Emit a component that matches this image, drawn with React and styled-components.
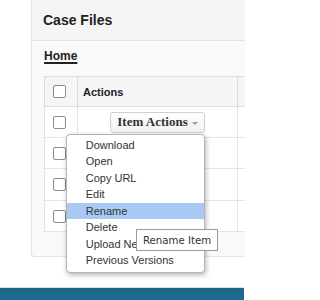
import React from 'react';
import styled, { createGlobalStyle } from 'styled-components';

const GlobalStyle = createGlobalStyle`
  html, body {
    margin: 0;
    padding: 0;
    background: #fff;
  }
  body {
    font-family: "Liberation Sans", Arial, sans-serif;
    color: #333;
  }
`;

const Page = styled.div`
  position: relative;
  width: 245px;
  height: 300px;
  overflow: hidden;
  display: flex;
  flex-direction: column;
`;

const Panel = styled.div`
  margin-left: 31px;
  width: 300px;
  height: 257px;
  flex-shrink: 0;
  box-sizing: border-box;
  background: #f9f9f9;
  border: 1px solid #e4e4e4;
  border-top: none;
  border-radius: 0 0 4px 4px;
`;

const PanelHeading = styled.div`
  height: 41px;
  box-sizing: border-box;
  display: flex;
  align-items: center;
  padding: 0 11px;
  background: #f5f5f5;
  border-bottom: 1px solid #e2e2e2;
  font-size: 14px;
  font-weight: bold;
  color: #222;
`;

const PanelBody = styled.div`
  display: flex;
  flex-direction: column;
  align-items: flex-start;
  padding: 8px 0 0 12px;
`;

const Crumb = styled.a`
  display: block;
  line-height: 14px;
  font-size: 12px;
  font-weight: bold;
  color: #222;
  text-decoration: underline;
  text-decoration-thickness: 2px;
  text-underline-offset: 2px;
  margin-bottom: 13px;
`;

const Table = styled.table`
  border-collapse: collapse;
  background: #fff;
  width: 260px;
  table-layout: fixed;
`;

const HeadCell = styled.th`
  height: 30px;
  box-sizing: border-box;
  background: #f5f5f5;
  border: 1px solid #dedede;
  text-align: left;
  font-size: 11px;
  font-weight: bold;
  color: #222;
  padding: 0 5px;
  width: ${(p) => p.$w}px;
`;

const Cell = styled.td`
  position: relative;
  height: ${(p) => p.$h || 31}px;
  box-sizing: border-box;
  border: 1px solid #e3e3e3;
  border-top: none;
  padding: 0;
  text-align: ${(p) => (p.$center ? 'center' : 'left')};
  vertical-align: middle;
`;

const Box = styled.span`
  display: block;
  width: 13px;
  height: 13px;
  box-sizing: border-box;
  margin-left: 8px;
  border: 1px solid #8c8c8c;
  border-radius: 2px;
  background: #fff;
`;

const ActionButton = styled.span`
  position: relative;
  display: inline-flex;
  align-items: center;
  gap: 4px;
  height: 21px;
  box-sizing: border-box;
  padding: 0 6px;
  border: 1px solid #cfcfcf;
  border-radius: 3px;
  background: linear-gradient(#ffffff, #f2f2f2);
  font-family: "Liberation Serif", "Times New Roman", serif;
  font-size: 13px;
  font-weight: bold;
  color: #333;
  white-space: nowrap;
`;

const Caret = styled.span`
  width: 0;
  height: 0;
  margin-top: 2px;
  border-left: 3px solid transparent;
  border-right: 3px solid transparent;
  border-top: 3px solid #9a9a9a;
`;

const Menu = styled.ul`
  position: absolute;
  top: 21px;
  right: -1px;
  width: 139px;
  box-sizing: border-box;
  margin: 0;
  padding: 2px 0 3px;
  list-style: none;
  background: #fff;
  border: 1px solid #b5b5b5;
  border-radius: 4px;
  box-shadow: 1px 2px 5px rgba(0, 0, 0, 0.3);
  text-align: left;
  z-index: 2;
`;

const MenuItem = styled.li`
  height: 16.5px;
  line-height: 16.5px;
  padding-left: 19px;
  font-family: "Liberation Sans", Arial, sans-serif;
  font-size: 11px;
  font-weight: normal;
  color: #333;
  white-space: nowrap;
  overflow: hidden;
  background: ${(p) => (p.$active ? '#a8c9f4' : 'transparent')};
`;

const Tooltip = styled.div`
  position: absolute;
  left: 136px;
  top: 229px;
  width: 82px;
  height: 22px;
  box-sizing: border-box;
  display: flex;
  align-items: center;
  justify-content: center;
  background: #fff;
  border: 1px solid #9a9a9a;
  font-family: "DejaVu Sans", Verdana, sans-serif;
  font-size: 10.2px;
  color: #333;
  z-index: 3;
`;

const Footer = styled.div`
  margin-top: 30px;
  width: 244px;
  height: 13px;
  flex-shrink: 0;
  background: linear-gradient(#1a6584, #1a6f98);
  border-top: 1px solid #cfe3ee;
`;

const menuItems = [
  'Download',
  'Open',
  'Copy URL',
  'Edit',
  'Rename',
  'Delete',
  'Upload New Version',
  'Previous Versions',
];

const App = () => (
  <Page>
    <GlobalStyle />
    <Panel>
      <PanelHeading>Case Files</PanelHeading>
      <PanelBody>
        <Crumb>Home</Crumb>
        <Table>
          <thead>
            <tr>
              <HeadCell $w={33} style={{ padding: 0 }}>
                <Box />
              </HeadCell>
              <HeadCell $w={160}>Actions</HeadCell>
              <HeadCell $w={67} />
            </tr>
          </thead>
          <tbody>
            <tr>
              <Cell>
                <Box />
              </Cell>
              <Cell $center>
                <ActionButton>
                  Item Actions
                  <Caret />
                  <Menu>
                    {menuItems.map((item) => (
                      <MenuItem key={item} $active={item === 'Rename'}>
                        {item}
                      </MenuItem>
                    ))}
                  </Menu>
                </ActionButton>
              </Cell>
              <Cell />
            </tr>
            {[31, 32, 31].map((h, i) => (
              <tr key={i}>
                <Cell $h={h}>
                  <Box />
                </Cell>
                <Cell $h={h} />
                <Cell $h={h} />
              </tr>
            ))}
          </tbody>
        </Table>
      </PanelBody>
    </Panel>
    <Footer />
    <Tooltip>Rename Item</Tooltip>
  </Page>
);

export default App;
